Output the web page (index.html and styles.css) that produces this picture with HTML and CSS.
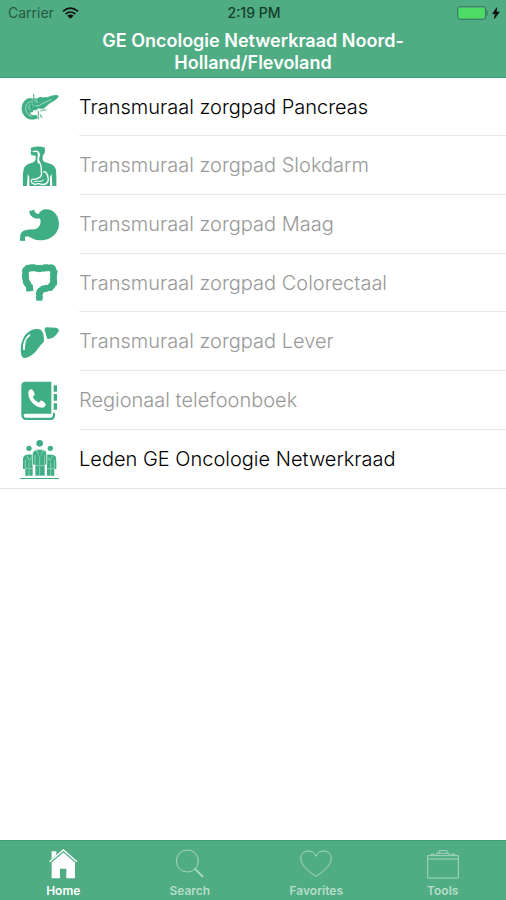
FILE: index.html
```html
<!DOCTYPE html>
<html lang="nl">
<head>
<meta charset="utf-8">
<meta name="viewport" content="width=device-width, initial-scale=1">
<title>GE Oncologie Netwerkraad</title>
<link rel="stylesheet" href="styles.css">
</head>
<body>
<header class="header">
  <div class="status">
    <div class="status-left">
      <span class="carrier">Carrier</span>
      <svg class="wifi" viewBox="0 0 51 36" aria-hidden="true">
        <path d="M3 13Q25 -6 48 13M11 21Q25 9 40 21" fill="none" stroke="#111" stroke-width="5"/>
        <path d="M16 26Q25 19 35 26L25 35Z" fill="#111"/>
      </svg>
    </div>
    <time class="clock">2:19 PM</time>
    <div class="status-right">
      <svg class="battery" viewBox="0 0 129 42" aria-hidden="true">
        <rect x="2" y="2" width="84" height="38" rx="7" fill="none" stroke="#3d7b60" stroke-width="3"/>
        <rect x="5" y="5" width="78" height="32" rx="4" fill="#4cdb64"/>
        <path d="M89 13Q95 21 89 29Z" fill="#3d7b60" stroke="#3d7b60" stroke-width="2"/>
        <path d="M119 5L107 23H115L112 38L127 18H118Z" fill="#111" stroke="#111" stroke-width="2"/>
      </svg>
    </div>
  </div>
  <h1 class="title">GE Oncologie Netwerkraad Noord-Holland/Flevoland</h1>
</header>

<main class="content">
  <ul class="list">
    <li class="row">
      <svg class="icon" viewBox="30 9 120 120" aria-hidden="true">
        <path d="M68 44Q46 40 38 61Q32 82 44 96Q57 111 82 103L79 94Q63 97 58 86Q77 82 86 72Q101 77 108 67Q115 58 130 51Q145 42 145 36Q140 31 125 36Q113 42 99 41Q88 38 80 45Z" fill="#3fae85" stroke="#3fae85" stroke-width="2"/>
        <path d="M64 53Q47 55 47 73Q47 92 65 97M60 61Q51 73 62 78M75 66Q88 68 95 60L125 46M77 47L84 56" fill="none" stroke="#d5eee3" stroke-width="2"/>
        <path d="M71 29V42Q73 51 80 58M67 45Q64 58 71 68M85 80V106M91 82Q98 76 108 78M91 91Q91 98 97 101" fill="none" stroke="#6dc1a1" stroke-width="4"/>
        <circle cx="73" cy="82" r="4" fill="#fff"/>
      </svg>
      <a class="label" href="#pancreas">Transmuraal zorgpad Pancreas</a>
    </li>
    <li class="row muted">
      <svg class="icon" viewBox="30 15 120 120" aria-hidden="true">
        <path d="M62 21Q84 13 105 20L104 36L98 44V58Q100 63 112 66Q132 70 137 83Q140 98 139 135H127L125 99L120 108V135H58V108L53 99L51 135H39Q37 91 43 79Q49 69 67 65Q76 62 77 55V44L65 43Q60 36 64 31Z" fill="#3fae85"/>
        <path d="M68 32Q83 28 87 36Q90 41 86 49Q84 58 89 65Q95 75 94 93M84 35Q88 43 84 51Q82 61 87 67" fill="none" stroke="#fff" stroke-width="4"/>
        <path d="M94 92Q97 105 86 111L75 115Q65 112 64 120Q64 128 76 130Q85 126 94 130Q108 133 114 121Q117 104 107 94Q103 90 100 94" fill="#3fae85" stroke="#fff" stroke-width="4"/>
        <path d="M72 122Q80 119 89 121Q98 122 101 115" fill="none" stroke="#fff" stroke-width="3"/>
      </svg>
      <a class="label" href="#slokdarm">Transmuraal zorgpad Slokdarm</a>
    </li>
    <li class="row muted">
      <svg class="icon" viewBox="30 12 120 120" aria-hidden="true">
        <path d="M73 26L57 31Q59 43 68 49Q78 55 88 52Q94 57 91 67Q89 79 79 83Q71 86 60 85L49 87Q35 89 31 101L30 119L45 120V108Q52 102 63 110Q81 121 103 117Q135 110 145 83Q151 57 137 38Q124 23 104 25Q91 28 86 39Q75 39 73 26Z" fill="#3fae85"/>
      </svg>
      <a class="label" href="#maag">Transmuraal zorgpad Maag</a>
    </li>
    <li class="row muted">
      <svg class="icon" viewBox="30 21 120 120" aria-hidden="true">
        <path d="M60 103L58 91L49 78L46 61L47 43L55 36L70 35L88 38L108 35L126 36L132 47L130 64L131 82L120 95L104 98Q89 101 88 114V134" fill="none" stroke="#3fae85" stroke-width="18" stroke-linejoin="round"/>
        <path d="M60 106L58 91L49 78L46 61L47 43L55 36L70 35L88 38L108 35L126 36L132 47L130 64L131 82L120 95L104 98Q89 101 88 114V128" fill="none" stroke="#3fae85" stroke-width="21" stroke-linejoin="round" stroke-dasharray="17 3"/>
      </svg>
      <a class="label" href="#colorectaal">Transmuraal zorgpad Colorectaal</a>
    </li>
    <li class="row muted">
      <svg class="icon" viewBox="30 15 120 120" aria-hidden="true">
        <path d="M77 36Q89 35 94 40L100 50L102 65L101 76Q92 83 83 96Q71 113 54 121Q38 128 34 114Q28 84 42 59Q55 39 77 36ZM108 31L138 32Q146 34 147 41Q138 57 126 63L113 67Q108 58 106 45Q101 36 108 31Z" fill="#3fae85"/>
        <path d="M58 55Q41 70 42 96" fill="none" stroke="#fff" stroke-width="6" stroke-linecap="round"/>
        <path d="M57 59Q50 65 47 75" fill="none" stroke="#3fae85" stroke-width="2"/>
      </svg>
      <a class="label" href="#lever">Transmuraal zorgpad Lever</a>
    </li>
    <li class="row muted">
      <svg class="icon" viewBox="30 18 120 120" aria-hidden="true">
        <path d="M47 20H124V116H45Q40 118 41 123Q42 128 48 128H123Q129 127 129 121V113H135V120Q135 135 123 135H48Q34 134 34 119V33Q34 20 47 20Z" fill="#3fae85"/>
        <path d="M131 31H141V50H131ZM131 57H141V77H131ZM131 85H141V104H131Z" fill="#3fae85"/>
        <path d="M57 45L66 43Q72 48 74 60L68 66Q74 78 86 83L93 76Q103 79 107 88Q107 97 97 98Q78 97 64 80Q51 62 57 45Z" fill="#fff"/>
      </svg>
      <a class="label" href="#telefoonboek">Regionaal telefoonboek</a>
    </li>
    <li class="row">
      <svg class="icon" viewBox="30 18 120 120" aria-hidden="true">
        <g fill="#3fae85">
          <circle cx="89" cy="31" r="10"/><circle cx="57" cy="46" r="8"/><circle cx="121" cy="46" r="8"/>
          <path d="M43 68Q50 63 68 65V128H46V108H39V79Q39 72 43 68ZM111 65Q130 63 136 69Q140 74 139 108H133V128H111Z"/>
          <path d="M72 53Q89 45 107 53Q112 60 110 96H105V129H75V96H67V67Q67 57 72 53Z" stroke="#fff" stroke-width="2"/>
          <path d="M31 135H147V138H31Z"/>
        </g>
        <path d="M79 52L89 72L100 52M89 74V95M89 101V129M75 66V96M104 66V96M51 69L58 83L65 72M127 69L120 83L113 72M57 88V104M57 110V129M122 88V104M122 110V129M46 80V108M133 80V108M76 98H103M47 107H67M111 107H132" fill="none" stroke="#b9e1d2" stroke-width="2"/>
        <path d="M86 53H93L91 58L93 66L89 71L85 66L87 58Z" fill="#3fae85"/>
      </svg>
      <a class="label" href="#leden">Leden GE Oncologie Netwerkraad</a>
    </li>
  </ul>
</main>

<nav class="tabs">
  <a class="tab active" href="#home">
    <svg class="tab-icon" viewBox="0 0 96 96" aria-hidden="true">
      <path d="M14 43L49 12L84 43V91H58V62H39V91H14Z" fill="#fff"/>
      <path d="M14 10H28V28L14 39Z" fill="#fff"/>
      <path d="M8 43L49 8L90 43" fill="none" stroke="#50ac83" stroke-width="8"/>
      <path d="M8 41L49 6L90 41" fill="none" stroke="#fff" stroke-width="4"/>
    </svg>
    <span>Home</span>
  </a>
  <a class="tab" href="#search">
    <svg class="tab-icon" viewBox="0 0 96 96" aria-hidden="true">
      <circle cx="40" cy="39" r="33" fill="none" stroke="#a7d6c0" stroke-width="3"/>
      <path d="M62 62L87 87" stroke="#a7d6c0" stroke-width="6"/>
    </svg>
    <span>Search</span>
  </a>
  <a class="tab" href="#favorites">
    <svg class="tab-icon" viewBox="0 0 96 96" aria-hidden="true">
      <path d="M48 85Q1 55 2 31Q3 11 24 9Q41 8 48 25Q55 8 72 9Q93 11 94 31Q95 55 48 85Z" fill="none" stroke="#a7d6c0" stroke-width="3"/>
    </svg>
    <span>Favorites</span>
  </a>
  <a class="tab" href="#tools">
    <svg class="tab-icon" viewBox="0 0 96 96" aria-hidden="true">
      <path d="M2 23H94V90H2ZM2 33H94M13 23V18H21V23M75 23V18H83V23M29 23V16H36V8H60V16H67V23M36 16H60" fill="none" stroke="#a7d6c0" stroke-width="3"/>
    </svg>
    <span>Tools</span>
  </a>
</nav>
</body>
</html>
```
FILE: styles.css
```css
* {
  box-sizing: border-box;
}

body {
  display: flex;
  flex-direction: column;
  min-height: 100vh;
  margin: 0;
  background: #fff;
  color: #000;
  font-family: Inter, "Liberation Sans", sans-serif;
}

a {
  color: inherit;
  text-decoration: none;
}

.header {
  padding-bottom: 3px;
  border-bottom: 1px solid #42a077;
  background: #50ac83;
}

.status {
  display: grid;
  grid-template-columns: 1fr auto 1fr;
  align-items: center;
  height: 26px;
  padding: 0 6px 0 8px;
  font-size: 14px;
  line-height: 16px;
}

.status-left {
  display: flex;
  align-items: center;
  gap: 8px;
  color: #245b43;
}

.status-right {
  display: flex;
  justify-content: flex-end;
}

.wifi {
  width: 17px;
  height: 12px;
}

.clock {
  color: #153d2b;
  font-weight: 500;
}

.battery {
  width: 43px;
  height: 14px;
}

.title {
  max-width: 340px;
  margin: 4px auto 0;
  color: #fff;
  font-size: 18px;
  font-weight: 600;
  line-height: 22px;
  text-align: center;
}

.content {
  flex: 1;
}

.list {
  margin: 0;
  padding: 0;
  border-bottom: 1px solid #e2e2e2;
  list-style: none;
}

.row {
  display: flex;
  align-items: center;
  gap: 19px;
  height: 59px;
  padding-left: 20px;
}

.row:nth-child(3n + 1) {
  height: 58px;
}

.icon {
  flex: none;
  width: 40px;
  height: 40px;
}

.label {
  display: flex;
  flex: 1;
  align-items: center;
  height: 100%;
  border-bottom: 1px solid #e8e8e8;
  font-size: 20px;
  font-weight: 300;
  line-height: 24px;
}

.row:last-child .label {
  border-bottom: 0;
}

.muted .label {
  color: #999;
}

.tabs {
  display: grid;
  grid-template-columns: repeat(4, 1fr);
  height: 60px;
  border-top: 1px solid #42a077;
  background: #50ac83;
}

.tab {
  display: flex;
  flex-direction: column;
  align-items: center;
  gap: 4px;
  padding-top: 7px;
  color: #b5dcca;
  font-size: 12px;
  font-weight: 600;
  line-height: 14px;
}

.tab.active {
  color: #fff;
}

.tab-icon {
  width: 32px;
  height: 32px;
}
```
